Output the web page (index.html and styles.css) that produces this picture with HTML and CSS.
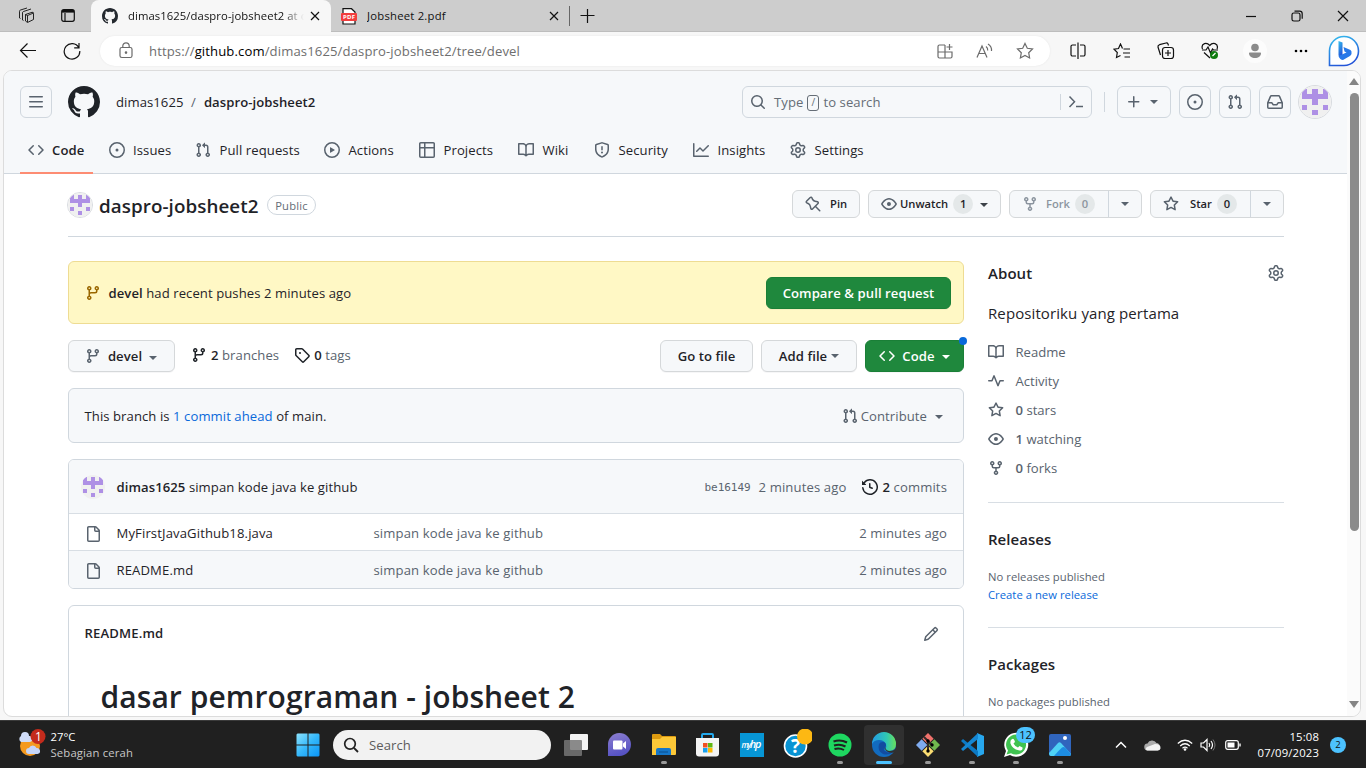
FILE: index.html
```html
<!DOCTYPE html>
<html lang="id">
<head>
<meta charset="utf-8">
<title>dimas1625/daspro-jobsheet2 at devel</title>
<link rel="stylesheet" href="styles.css">
</head>
<body>
<svg class="sprite" width="0" height="0" aria-hidden="true">
  <symbol id="mark" viewBox="0 0 16 16"><path d="M8 0c4.42 0 8 3.58 8 8a8.013 8.013 0 0 1-5.45 7.59c-.4.08-.55-.17-.55-.38 0-.27.01-1.13.01-2.2 0-.75-.25-1.23-.54-1.48 1.78-.2 3.65-.88 3.65-3.95 0-.88-.31-1.59-.82-2.15.08-.2.36-1.02-.08-2.12 0 0-.67-.22-2.2.82-.64-.18-1.32-.27-2-.27-.68 0-1.36.09-2 .27-1.53-1.03-2.2-.82-2.2-.82-.44 1.1-.16 1.92-.08 2.12-.51.56-.82 1.28-.82 2.15 0 3.06 1.86 3.75 3.64 3.95-.23.2-.44.55-.51 1.07-.46.21-1.61.55-2.33-.66-.15-.24-.6-.83-1.23-.82-.67.01-.27.38.01.53.34.19.73.9.82 1.13.16.45.68 1.31 2.69.94 0 .67.01 1.3.01 1.49 0 .21-.15.45-.55.38A7.995 7.995 0 0 1 0 8c0-4.42 3.58-8 8-8Z"/></symbol>
  <symbol id="code" viewBox="0 0 16 16"><path d="m11.28 3.22 4.25 4.25a.75.75 0 0 1 0 1.06l-4.25 4.25a.749.749 0 1 1-1.06-1.06L13.94 8l-3.72-3.72a.749.749 0 1 1 1.06-1.06Zm-6.56 0a.751.751 0 0 1 1.06 1.06L2.06 8l3.72 3.72a.749.749 0 1 1-1.06 1.06L.47 8.53a.75.75 0 0 1 0-1.06Z"/></symbol>
  <symbol id="issue" viewBox="0 0 16 16"><path d="M8 9.5a1.5 1.5 0 1 0 0-3 1.5 1.5 0 0 0 0 3Z"/><path d="M8 0a8 8 0 1 1 0 16A8 8 0 0 1 8 0ZM1.5 8a6.5 6.5 0 1 0 13 0 6.5 6.5 0 0 0-13 0Z"/></symbol>
  <symbol id="pr" viewBox="0 0 16 16"><path d="M1.5 3.25a2.25 2.25 0 1 1 3 2.122v5.256a2.251 2.251 0 1 1-1.5 0V5.372A2.25 2.25 0 0 1 1.5 3.25Zm5.677-.177L9.573.677A.25.25 0 0 1 10 .854V2.5h1A2.5 2.5 0 0 1 13.5 5v5.628a2.251 2.251 0 1 1-1.5 0V5a1 1 0 0 0-1-1h-1v1.646a.25.25 0 0 1-.427.177L7.177 3.427a.25.25 0 0 1 0-.354ZM3.75 2.5a.75.75 0 1 0 0 1.5.75.75 0 0 0 0-1.5Zm0 9.5a.75.75 0 1 0 0 1.5.75.75 0 0 0 0-1.5Zm8.25.75a.75.75 0 1 0 1.5 0 .75.75 0 0 0-1.5 0Z"/></symbol>
  <symbol id="play" viewBox="0 0 16 16"><path d="M8 0a8 8 0 1 1 0 16A8 8 0 0 1 8 0ZM1.5 8a6.5 6.5 0 1 0 13 0 6.5 6.5 0 0 0-13 0Zm4.879-2.773 4.264 2.559a.25.25 0 0 1 0 .428l-4.264 2.559A.25.25 0 0 1 6 10.559V5.442a.25.25 0 0 1 .379-.215Z"/></symbol>
  <symbol id="table" viewBox="0 0 16 16"><path d="M0 1.75C0 .784.784 0 1.75 0h12.5C15.216 0 16 .784 16 1.75v12.5A1.75 1.75 0 0 1 14.25 16H1.75A1.75 1.75 0 0 1 0 14.25ZM6.5 6.5v8h7.75a.25.25 0 0 0 .25-.25V6.5Zm8-1.5V1.75a.25.25 0 0 0-.25-.25H6.5V5Zm-13 1.5v7.75c0 .138.112.25.25.25H5v-8ZM5 5V1.5H1.75a.25.25 0 0 0-.25.25V5Z"/></symbol>
  <symbol id="book" viewBox="0 0 16 16"><path d="M0 1.75A.75.75 0 0 1 .75 1h4.253c1.227 0 2.317.59 3 1.501A3.743 3.743 0 0 1 11.006 1h4.245a.75.75 0 0 1 .75.75v10.5a.75.75 0 0 1-.75.75h-4.507a2.25 2.25 0 0 0-1.591.659l-.622.621a.75.75 0 0 1-1.06 0l-.622-.621A2.25 2.25 0 0 0 5.258 13H.75a.75.75 0 0 1-.75-.75Zm7.251 10.324.004-5.073-.002-2.253A2.25 2.25 0 0 0 5.003 2.5H1.5v9h3.757a3.75 3.75 0 0 1 1.994.574ZM8.755 4.75l-.004 7.322a3.752 3.752 0 0 1 1.992-.572H14.5v-9h-3.495a2.25 2.25 0 0 0-2.25 2.25Z"/></symbol>
  <symbol id="shield" viewBox="0 0 16 16"><path d="M7.467.133a1.748 1.748 0 0 1 1.066 0l5.25 1.68A1.75 1.75 0 0 1 15 3.48V7c0 1.566-.32 3.182-1.303 4.682-.983 1.498-2.585 2.813-5.032 3.855a1.697 1.697 0 0 1-1.33 0c-2.447-1.042-4.049-2.357-5.032-3.855C1.32 10.182 1 8.566 1 7V3.48a1.75 1.75 0 0 1 1.217-1.667Zm.61 1.429a.25.25 0 0 0-.153 0l-5.25 1.68a.25.25 0 0 0-.174.238V7c0 1.358.275 2.666 1.057 3.86.784 1.194 2.121 2.34 4.366 3.297a.196.196 0 0 0 .154 0c2.245-.956 3.582-2.104 4.366-3.298C13.225 9.666 13.5 8.36 13.5 7V3.48a.251.251 0 0 0-.174-.237l-5.25-1.68ZM8.75 4.75v3a.75.75 0 0 1-1.5 0v-3a.75.75 0 0 1 1.5 0ZM9 10.5a1 1 0 1 1-2 0 1 1 0 0 1 2 0Z"/></symbol>
  <symbol id="graph" viewBox="0 0 16 16"><path d="M1.5 1.75V13.5h13.75a.75.75 0 0 1 0 1.5H.75a.75.75 0 0 1-.75-.75V1.75a.75.75 0 0 1 1.5 0Zm14.28 2.53-5.25 5.25a.75.75 0 0 1-1.06 0L7 7.06 4.28 9.78a.751.751 0 1 1-1.06-1.06l3.25-3.25a.75.75 0 0 1 1.06 0L10 7.94l4.72-4.72a.751.751 0 1 1 1.06 1.06Z"/></symbol>
  <symbol id="gear" viewBox="0 0 16 16"><path d="M8 0a8.2 8.2 0 0 1 .701.031C9.444.095 9.99.645 10.16 1.29l.288 1.107c.018.066.079.158.212.224.231.114.454.243.668.386.123.082.233.09.299.071l1.103-.303c.644-.176 1.392.021 1.82.63.27.385.506.792.704 1.218.315.675.111 1.422-.364 1.891l-.814.806c-.049.048-.098.147-.088.294.016.257.016.515 0 .772-.01.147.038.246.088.294l.814.806c.475.469.679 1.216.364 1.891a7.977 7.977 0 0 1-.704 1.217c-.428.61-1.176.807-1.82.63l-1.102-.302c-.067-.019-.177-.011-.3.071a5.909 5.909 0 0 1-.668.386c-.133.066-.194.158-.211.224l-.29 1.106c-.168.646-.715 1.196-1.458 1.26a8.006 8.006 0 0 1-1.402 0c-.743-.064-1.289-.614-1.458-1.26l-.289-1.106c-.018-.066-.079-.158-.212-.224a5.738 5.738 0 0 1-.668-.386c-.123-.082-.233-.09-.299-.071l-1.103.303c-.644.176-1.392-.021-1.82-.63a8.12 8.12 0 0 1-.704-1.218c-.315-.675-.111-1.422.363-1.891l.815-.806c.05-.048.098-.147.088-.294a6.214 6.214 0 0 1 0-.772c.01-.147-.038-.246-.088-.294l-.815-.806C.635 6.045.431 5.298.746 4.623a7.92 7.92 0 0 1 .704-1.217c.428-.61 1.176-.807 1.82-.63l1.102.302c.067.019.177.011.3-.071.214-.143.437-.272.668-.386.133-.066.194-.158.211-.224l.29-1.106C6.009.645 6.556.095 7.299.03 7.53.01 7.764 0 8 0Zm-.571 1.525c-.036.003-.108.036-.137.146l-.289 1.105c-.147.561-.549.967-.998 1.189-.173.086-.34.183-.5.29-.417.278-.97.423-1.529.27l-1.103-.303c-.109-.03-.175.016-.195.045-.22.312-.412.644-.573.99-.014.031-.021.11.059.19l.815.806c.411.406.562.957.53 1.456a4.709 4.709 0 0 0 0 .582c.032.499-.119 1.05-.53 1.456l-.815.806c-.081.08-.073.159-.059.19.162.346.353.677.573.989.02.03.085.076.195.046l1.102-.303c.56-.153 1.113-.008 1.53.27.161.107.328.204.501.29.447.222.85.629.997 1.189l.289 1.105c.029.109.101.143.137.146a6.6 6.6 0 0 0 1.142 0c.036-.003.108-.036.137-.146l.289-1.105c.147-.561.549-.967.998-1.189.173-.086.34-.183.5-.29.417-.278.97-.423 1.529-.27l1.103.303c.109.029.175-.016.195-.045.22-.313.411-.644.573-.99.014-.031.021-.11-.059-.19l-.815-.806c-.411-.406-.562-.957-.53-1.456a4.709 4.709 0 0 0 0-.582c-.032-.499.119-1.05.53-1.456l.815-.806c.081-.08.073-.159.059-.19a6.464 6.464 0 0 0-.573-.989c-.02-.03-.085-.076-.195-.046l-1.102.303c-.56.153-1.113.008-1.53-.27a4.44 4.44 0 0 0-.501-.29c-.447-.222-.85-.629-.997-1.189l-.289-1.105c-.029-.11-.101-.143-.137-.146a6.6 6.6 0 0 0-1.142 0ZM11 8a3 3 0 1 1-6 0 3 3 0 0 1 6 0ZM9.5 8a1.5 1.5 0 1 0-3.001.001A1.5 1.5 0 0 0 9.5 8Z"/></symbol>
  <symbol id="pin" viewBox="0 0 16 16"><path d="m11.294.984 3.722 3.722a1.75 1.75 0 0 1-.504 2.826l-1.327.613a3.089 3.089 0 0 0-1.707 2.084l-.584 2.454c-.317 1.332-1.972 1.8-2.94.832L5.75 11.311 1.78 15.28a.749.749 0 1 1-1.06-1.06l3.969-3.97-2.204-2.204c-.968-.968-.5-2.623.832-2.94l2.454-.584a3.08 3.08 0 0 0 2.084-1.707l.613-1.327a1.75 1.75 0 0 1 2.826-.504ZM6.283 9.723l2.732 2.731a.25.25 0 0 0 .42-.119l.584-2.454a4.586 4.586 0 0 1 2.537-3.098l1.328-.613a.25.25 0 0 0 .072-.404l-3.722-3.722a.25.25 0 0 0-.404.072l-.613 1.328a4.584 4.584 0 0 1-3.098 2.537l-2.454.584a.25.25 0 0 0-.119.42l2.731 2.732Z"/></symbol>
  <symbol id="eye" viewBox="0 0 16 16"><path d="M8 2c1.981 0 3.671.992 4.933 2.078 1.27 1.091 2.187 2.345 2.637 3.023a1.62 1.62 0 0 1 0 1.798c-.45.678-1.367 1.932-2.637 3.023C11.67 13.008 9.981 14 8 14c-1.981 0-3.671-.992-4.933-2.078C1.797 10.83.88 9.576.43 8.898a1.62 1.62 0 0 1 0-1.798c.45-.677 1.367-1.931 2.637-3.022C4.33 2.992 6.019 2 8 2ZM1.679 7.932a.12.12 0 0 0 0 .136c.411.622 1.241 1.75 2.366 2.717C5.176 11.758 6.527 12.5 8 12.5c1.473 0 2.825-.742 3.955-1.715 1.124-.967 1.954-2.096 2.366-2.717a.12.12 0 0 0 0-.136c-.412-.621-1.242-1.75-2.366-2.717C10.824 4.242 9.473 3.5 8 3.5c-1.473 0-2.825.742-3.955 1.715-1.124.967-1.954 2.096-2.366 2.717ZM8 10a2 2 0 1 1-.001-3.999A2 2 0 0 1 8 10Z"/></symbol>
  <symbol id="fork" viewBox="0 0 16 16"><path d="M5 5.372v.878c0 .414.336.75.75.75h4.5a.75.75 0 0 0 .75-.75v-.878a2.25 2.25 0 1 1 1.5 0v.878a2.25 2.25 0 0 1-2.25 2.25h-1.5v2.128a2.251 2.251 0 1 1-1.5 0V8.5h-1.5A2.25 2.25 0 0 1 3.5 6.25v-.878a2.25 2.25 0 1 1 1.5 0ZM5 3.25a.75.75 0 1 0-1.5 0 .75.75 0 0 0 1.5 0Zm6.75.75a.75.75 0 1 0 0-1.5.75.75 0 0 0 0 1.5Zm-3 8.75a.75.75 0 1 0-1.5 0 .75.75 0 0 0 1.5 0Z"/></symbol>
  <symbol id="star" viewBox="0 0 16 16"><path d="M8 .25a.75.75 0 0 1 .673.418l1.882 3.815 4.21.612a.75.75 0 0 1 .416 1.279l-3.046 2.97.719 4.192a.751.751 0 0 1-1.088.791L8 12.347l-3.766 1.98a.75.75 0 0 1-1.088-.79l.72-4.194L.818 6.374a.75.75 0 0 1 .416-1.28l4.21-.611L7.327.668A.75.75 0 0 1 8 .25Zm0 2.445L6.615 5.5a.75.75 0 0 1-.564.41l-3.097.45 2.24 2.184a.75.75 0 0 1 .216.664l-.528 3.084 2.769-1.456a.75.75 0 0 1 .698 0l2.77 1.456-.53-3.084a.75.75 0 0 1 .216-.664l2.24-2.183-3.096-.45a.75.75 0 0 1-.564-.41L8 2.694Z"/></symbol>
  <symbol id="branch" viewBox="0 0 16 16"><path d="M9.5 3.25a2.25 2.25 0 1 1 3 2.122V6A2.5 2.5 0 0 1 10 8.5H6a1 1 0 0 0-1 1v1.128a2.251 2.251 0 1 1-1.5 0V5.372a2.25 2.25 0 1 1 1.5 0v1.836A2.493 2.493 0 0 1 6 7h4a1 1 0 0 0 1-1v-.628A2.25 2.25 0 0 1 9.5 3.25Zm-6 0a.75.75 0 1 0 1.5 0 .75.75 0 0 0-1.5 0Zm8.25-.75a.75.75 0 1 0 0 1.5.75.75 0 0 0 0-1.5ZM4.25 12a.75.75 0 1 0 0 1.5.75.75 0 0 0 0-1.5Z"/></symbol>
  <symbol id="tag" viewBox="0 0 16 16"><path d="M1 7.775V2.75C1 1.784 1.784 1 2.75 1h5.025c.464 0 .91.184 1.238.513l6.25 6.25a1.75 1.75 0 0 1 0 2.474l-5.026 5.026a1.75 1.75 0 0 1-2.474 0l-6.25-6.25A1.752 1.752 0 0 1 1 7.775Zm1.5 0c0 .066.026.13.073.177l6.25 6.25a.25.25 0 0 0 .354 0l5.025-5.025a.25.25 0 0 0 0-.354l-6.25-6.25a.25.25 0 0 0-.177-.073H2.75a.25.25 0 0 0-.25.25ZM6 5a1 1 0 1 1 0 2 1 1 0 0 1 0-2Z"/></symbol>
  <symbol id="file" viewBox="0 0 16 16"><path d="M2 1.75C2 .784 2.784 0 3.75 0h6.586c.464 0 .909.184 1.237.513l2.914 2.914c.329.328.513.773.513 1.237v9.586A1.75 1.75 0 0 1 13.25 16h-9.5A1.75 1.75 0 0 1 2 14.25Zm1.75-.25a.25.25 0 0 0-.25.25v12.5c0 .138.112.25.25.25h9.5a.25.25 0 0 0 .25-.25V6h-2.75A1.75 1.75 0 0 1 9 4.25V1.5Zm6.75.062V4.25c0 .138.112.25.25.25h2.688l-.011-.013-2.914-2.914-.013-.011Z"/></symbol>
  <symbol id="history" viewBox="0 0 16 16"><path d="m.427 1.927 1.215 1.215a8.002 8.002 0 1 1-1.6 5.685.75.75 0 1 1 1.493-.154 6.5 6.5 0 1 0 1.18-4.458l1.358 1.358A.25.25 0 0 1 3.896 6H.25A.25.25 0 0 1 0 5.75V2.104a.25.25 0 0 1 .427-.177ZM7.75 4a.75.75 0 0 1 .75.75v2.992l2.028.812a.75.75 0 0 1-.557 1.392l-2.5-1A.751.751 0 0 1 7 8.25v-3.5A.75.75 0 0 1 7.75 4Z"/></symbol>
  <symbol id="pencil" viewBox="0 0 16 16"><path d="M11.013 1.427a1.75 1.75 0 0 1 2.474 0l1.086 1.086a1.75 1.75 0 0 1 0 2.474l-8.61 8.61c-.21.21-.47.364-.756.445l-3.251.93a.75.75 0 0 1-.927-.928l.929-3.25c.081-.286.235-.547.445-.758l8.61-8.61Zm.176 4.823L9.75 4.81l-6.286 6.287a.253.253 0 0 0-.064.108l-.558 1.953 1.953-.558a.253.253 0 0 0 .108-.064Zm1.238-3.763a.25.25 0 0 0-.354 0L10.811 3.75l1.439 1.44 1.263-1.263a.25.25 0 0 0 0-.354Z"/></symbol>
  <symbol id="pulse" viewBox="0 0 16 16"><path d="M6 2c.306 0 .582.187.696.471L10 10.731l1.304-3.26A.751.751 0 0 1 12 7h3.25a.75.75 0 0 1 0 1.5h-2.742l-1.812 4.528a.751.751 0 0 1-1.392 0L6 4.77 4.696 8.03A.75.75 0 0 1 4 8.5H.75a.75.75 0 0 1 0-1.5h2.742l1.812-4.529A.751.751 0 0 1 6 2Z"/></symbol>
  <symbol id="inbox" viewBox="0 0 16 16"><path d="M2.8 2.06A1.75 1.75 0 0 1 4.41 1h7.18c.7 0 1.333.417 1.61 1.06l2.74 6.395c.04.093.06.194.06.295v4.5A1.75 1.75 0 0 1 14.25 15H1.75A1.75 1.75 0 0 1 0 13.25v-4.5c0-.101.02-.202.06-.295Zm1.61.44a.25.25 0 0 0-.23.152L1.887 8H4.75a.75.75 0 0 1 .6.3L6.625 10h2.75l1.275-1.7a.75.75 0 0 1 .6-.3h2.863L11.82 2.652a.25.25 0 0 0-.23-.152Zm10.09 7h-2.875l-1.275 1.7a.75.75 0 0 1-.6.3h-3.5a.75.75 0 0 1-.6-.3L4.375 9.5H1.5v3.75c0 .138.112.25.25.25h12.5a.25.25 0 0 0 .25-.25Z"/></symbol>
  <symbol id="search" viewBox="0 0 16 16"><path d="M10.68 11.74a6 6 0 0 1-7.922-8.982 6 6 0 0 1 8.982 7.922l3.04 3.04a.749.749 0 1 1-1.06 1.06ZM11.5 7a4.499 4.499 0 1 0-8.997 0A4.499 4.499 0 0 0 11.5 7Z"/></symbol>
  <symbol id="menu" viewBox="0 0 16 16"><path d="M1 2.75A.75.75 0 0 1 1.75 2h12.5a.75.75 0 0 1 0 1.5H1.75A.75.75 0 0 1 1 2.75Zm0 5A.75.75 0 0 1 1.75 7h12.5a.75.75 0 0 1 0 1.5H1.75A.75.75 0 0 1 1 7.75ZM1.75 12h12.5a.75.75 0 0 1 0 1.5H1.75a.75.75 0 0 1 0-1.5Z"/></symbol>
  <symbol id="plus" viewBox="0 0 16 16"><path d="M7.75 2a.75.75 0 0 1 .75.75V7h4.25a.75.75 0 0 1 0 1.5H8.5v4.25a.75.75 0 0 1-1.5 0V8.5H2.75a.75.75 0 0 1 0-1.5H7V2.75A.75.75 0 0 1 7.75 2Z"/></symbol>
  <symbol id="ident" viewBox="0 0 12 12"><path fill="#f0f0f0" d="M0 0h12v12H0z"/><path fill="#ae90e5" shape-rendering="crispEdges" d="M1 1h2v2h2V1h2v2h2V1h2v4H7v2H5V5H1zM1 7h2v2H1zM9 7h2v2H9zM5 9h2v2H5z"/></symbol>
  <symbol id="x" viewBox="0 0 10 10"><path d="M1 1l8 8M9 1l-8 8" fill="none" stroke="#111" stroke-width="1.2"/></symbol>
</svg>

<header class="tabbar">
  <div class="tabtools">
    <svg width="17" height="17" viewBox="0 0 17 17" class="line thin"><path d="M7.500 7.500L14 5.300q1.500-.3 1.500 1v6.200l-6 3-2-1.500zM7.500 7.500l2 1V15M9.500 8.500l5.800-2.400M4.500 13V5.800q0-1 1-1.300L13 2M1.500 11V4.300q0-1 1-1.300L9 1M4.500 13l1 .5M1.500 11l1 .5"/></svg>
    <svg width="16" height="15" viewBox="0 0 16 15" class="line"><rect x="1.700" y="1.700" width="12.600" height="11.600" rx="2"/><path d="M2 3.300h12" stroke-width="2.600"/><path d="M5 5v8"/></svg>
  </div>
  <div class="tab active"><svg class="i"><use href="#mark"/></svg><span class="tabtitle">dimas1625/daspro-jobsheet2 at d</span><svg class="tx"><use href="#x"/></svg></div>
  <div class="tab second"><svg width="16" height="17" viewBox="0 0 16 17"><path d="M2 .7h8.500L14 4v12H2z" fill="#fff" stroke="#111" stroke-width="1.200"/><rect y="5" width="16" height="8" rx="1" fill="#f23d3d"/><text x="2" y="11.300" font-size="6" font-weight="700" fill="#fff" font-family="Open Sans" textLength="12">PDF</text></svg><span class="tabtitle">Jobsheet 2.pdf</span><svg class="tx"><use href="#x"/></svg></div>
  <svg class="newtab" width="16" height="16" viewBox="0 0 16 16"><path d="M7.500 1v14M.5 7.500h14" stroke="#111" stroke-width="1.200"/></svg>
  <div class="winctl">
    <svg width="12" height="12" viewBox="0 0 12 12" class="line"><path d="M1 6.500h10"/></svg>
    <svg width="12" height="12" viewBox="0 0 12 12" class="line"><rect x="1" y="3" width="8" height="8" rx="1.800"/><path d="M3.500 1.200h5.200a2.500 2.500 0 0 1 2.500 2.500v5"/></svg>
    <svg width="12" height="12" viewBox="0 0 12 12" class="line"><path d="M1 1l10 10M11 1L1 11"/></svg>
  </div>
</header>

<div class="toolbar">
  <svg class="back line" width="18" height="16" viewBox="0 0 18 16"><path d="M17 7.500H1.500M8.500.500L1.500 7.500l7 7"/></svg>
  <svg class="reload line" width="18" height="18" viewBox="0 0 18 18"><path d="M15.800 5.500A7.800 7.800 0 1 0 16.800 9M16 1v4.800h-4.800"/></svg>
  <div class="url">
    <svg class="line gray" width="14" height="17" viewBox="0 0 14 17"><rect x="1" y="5.500" width="12" height="10" rx="1.800"/><path d="M3.800 5.500V4a3.200 3.200 0 0 1 6.400 0v1.500"/><circle cx="7" cy="10.600" r=".7" fill="#666"/></svg>
    <span class="addr">https://<b>github.com</b>/dimas1625/daspro-jobsheet2/tree/devel</span>
    <span class="urlicons">
      <svg class="line gray" width="16" height="16" viewBox="0 0 16 16"><path d="M8 2H2.500A1.500 1.500 0 0 0 1 3.500v10A1.500 1.500 0 0 0 2.500 15h11a1.500 1.500 0 0 0 1.500-1.500V9H1M8 2v13M12.500 1v6M9.500 4h6"/></svg>
      <svg class="line gray" width="17" height="16" viewBox="0 0 17 16"><path d="M1 14.500L6 3l5 11.500M2.800 10.500h6.400M10 3.500q2 1.500 1.700 4M12 1q4 2.500 3.500 7"/></svg>
      <svg class="line gray" width="18" height="18" viewBox="0 0 18 18"><path d="M9 1.500l2.300 4.800 5.200.7-3.800 3.700.9 5.300L9 13.500 4.400 16l.9-5.300L1.500 7l5.200-.7z"/></svg>
    </span>
  </div>
  <div class="edgeicons">
    <span><svg class="line" width="16" height="18" viewBox="0 0 16 18"><path d="M6 3H2.500A1.500 1.500 0 0 0 1 4.500v8A1.500 1.500 0 0 0 2.500 14H6M10 3h3.500A1.500 1.500 0 0 1 15 4.500v8a1.500 1.500 0 0 1-1.500 1.500H10M8 .500v16.500"/></svg></span>
    <span><svg class="line" width="18" height="17" viewBox="0 0 18 17"><path d="M9.500 5.500L7.500 1 5.500 5.500l-4.500.7 3.300 3.300-.8 5 4-2M10.500 6H17M10 10h7M11.500 14H17"/></svg></span>
    <span><svg class="line" width="18" height="18" viewBox="0 0 18 18"><rect x="5.500" y="5.500" width="11" height="11" rx="2.500"/><path d="M11 8v6M8 11h6M3.500 13L1 5Q.7 3.300 2.500 2.700L9 1q1.500-.3 2 1l.5 1.500"/></svg></span>
    <span><svg class="line" width="18" height="18" viewBox="0 0 18 18"><path d="M1.500 7Q0 3 3.500 1.600 6.500.7 8.700 3.500 11 .7 14 1.600q3.500 1.400 2 5.400M1 8h4l2-3 2.500 6 2-4 1 1h4.500M3 10.500l6 5.500"/><circle cx="13" cy="13" r="4" fill="#107c10" stroke="none"/><path d="M11.500 14l3-3" stroke="#fff"/></svg></span>
    <span class="person"><svg width="24" height="24" viewBox="0 0 24 24"><circle cx="12" cy="12" r="12" fill="#fcfcfc"/><circle cx="12" cy="8.500" r="3.800" fill="#8b8b8b"/><path d="M6 14.200q0-.7.700-.7h10.600q.7 0 .7.700c0 3-2.700 4.800-6 4.800s-6-1.800-6-4.800z" fill="#8b8b8b"/></svg></span>
    <span><svg width="14" height="4" viewBox="0 0 14 4"><circle cx="2" cy="2" r="1.300"/><circle cx="7" cy="2" r="1.300"/><circle cx="12" cy="2" r="1.300"/></svg></span>
    <svg class="bing" width="32" height="32" viewBox="0 0 32 32"><defs><linearGradient id="bg" x1="0" y1="0" x2=".4" y2="1"><stop offset="0" stop-color="#35c1ee"/><stop offset="1" stop-color="#2455d8"/></linearGradient></defs><path d="M1.500 30.500V16A14.500 14.500 0 1 1 16 30.500z" fill="#fff" stroke="url(#bg)" stroke-width="1.600"/><path d="M10.500 6l4 1.500v13L12.500 22l-2-1.500z" fill="url(#bg)"/><path d="M15.500 12l7 3q1.500 1 1 4-.5 1.500-2 2.300L15 25q-3 0-4.500-4l8-3.500-2-1z" fill="#2878e8"/></svg>
  </div>
</div>

<div class="frame">
<div class="page">
  <div class="ghead">
    <div class="gtop">
      <span class="sq"><svg class="i"><use href="#menu"/></svg></span>
      <svg class="logo"><use href="#mark"/></svg>
      <span class="crumb">dimas1625</span><span class="slash">/</span><b class="crumb repo">daspro-jobsheet2</b>
      <div class="gsearch"><svg class="i"><use href="#search"/></svg><span class="stext">Type <kbd>/</kbd> to search</span><svg class="term" width="16" height="16" viewBox="0 0 16 16"><path d="M1.500 2.500l5 5.300-5 5.300M8 12.600h7" fill="none" stroke="#59636e" stroke-width="1.500"/></svg></div>
      <span class="vline"></span>
      <span class="sq wide"><svg class="i"><use href="#plus"/></svg><i class="caret"></i></span>
      <span class="sq"><svg class="i"><use href="#issue"/></svg></span>
      <span class="sq"><svg class="i"><use href="#pr"/></svg></span>
      <span class="sq"><svg class="i"><use href="#inbox"/></svg></span>
      <svg class="avatar"><use href="#ident"/></svg>
    </div>
    <nav class="gnav">
      <a class="on"><svg class="i"><use href="#code"/></svg>Code</a>
      <a><svg class="i"><use href="#issue"/></svg>Issues</a>
      <a><svg class="i"><use href="#pr"/></svg>Pull requests</a>
      <a><svg class="i"><use href="#play"/></svg>Actions</a>
      <a><svg class="i"><use href="#table"/></svg>Projects</a>
      <a><svg class="i"><use href="#book"/></svg>Wiki</a>
      <a><svg class="i"><use href="#shield"/></svg>Security</a>
      <a><svg class="i"><use href="#graph"/></svg>Insights</a>
      <a><svg class="i"><use href="#gear"/></svg>Settings</a>
    </nav>
  </div>

  <div class="wrap">
    <div class="title">
      <svg class="avatar small"><use href="#ident"/></svg><h2>daspro-jobsheet2</h2><span class="pill">Public</span>
      <div class="acts">
        <span class="sbtn pin"><svg class="i flip"><use href="#pin"/></svg>Pin</span>
        <span class="sbtn watch"><svg class="i"><use href="#eye"/></svg>Unwatch<em>1</em><i class="caret"></i></span>
        <span class="sbtn split"><span class="main dim"><svg class="i"><use href="#fork"/></svg>Fork<em>0</em></span><span class="drop"><i class="caret"></i></span></span>
        <span class="sbtn split"><span class="main st"><svg class="i"><use href="#star"/></svg>Star<em>0</em></span><span class="drop"><i class="caret"></i></span></span>
      </div>
    </div>

    <div class="cols">
      <main>
        <div class="flash"><svg class="i"><use href="#branch"/></svg><span><b>devel</b> had recent pushes 2 minutes ago</span><span class="btn green">Compare &amp; pull request</span></div>
        <div class="filebar">
          <span class="btn branchbtn"><svg class="i"><use href="#branch"/></svg>devel<i class="caret"></i></span>
          <span class="meta br"><svg class="i"><use href="#branch"/></svg><span><b>2</b> branches</span></span>
          <span class="meta"><svg class="i"><use href="#tag"/></svg><span><b>0</b> tags</span></span>
          <span class="btn goto">Go to file</span>
          <span class="btn add">Add file<i class="caret"></i></span>
          <span class="btn green codebtn"><svg class="i"><use href="#code"/></svg>Code<i class="caret"></i><span class="dot"></span></span>
        </div>
        <div class="box ahead"><span>This branch is <a class="link">1 commit ahead</a> of main.</span><span class="contrib"><svg class="i"><use href="#pr"/></svg>Contribute<i class="caret"></i></span></div>
        <div class="box files">
          <div class="commit"><svg class="avatar mini"><use href="#ident"/></svg><span><b>dimas1625</b> simpan kode java ke github</span><span class="right"><code>be16149</code><span class="when">2 minutes ago</span><svg class="i"><use href="#history"/></svg><span><b>2</b> commits</span></span></div>
          <div class="row"><svg class="i"><use href="#file"/></svg><span class="name">MyFirstJavaGithub18.java</span><span class="msg">simpan kode java ke github</span><span class="ago">2 minutes ago</span></div>
          <div class="row alt"><svg class="i"><use href="#file"/></svg><span class="name">README.md</span><span class="msg">simpan kode java ke github</span><span class="ago">2 minutes ago</span></div>
        </div>
        <div class="box readme">
          <div class="rhead"><b>README.md</b><svg class="i"><use href="#pencil"/></svg></div>
          <h1>dasar pemrograman - jobsheet 2</h1>
        </div>
      </main>
      <aside>
        <div class="about"><h3>About</h3><svg class="i"><use href="#gear"/></svg></div>
        <p class="desc">Repositoriku yang pertama</p>
        <ul>
          <li><svg class="i"><use href="#book"/></svg><span>Readme</span></li>
          <li><svg class="i"><use href="#pulse"/></svg><span>Activity</span></li>
          <li><svg class="i"><use href="#star"/></svg><span><b>0</b> stars</span></li>
          <li><svg class="i"><use href="#eye"/></svg><span><b>1</b> watching</span></li>
          <li><svg class="i"><use href="#fork"/></svg><span><b>0</b> forks</span></li>
        </ul>
        <section><h3>Releases</h3><p>No releases published</p><p><a class="link">Create a new release</a></p></section>
        <section><h3>Packages</h3><p>No packages published</p><p><a class="link">Publish your first package</a></p></section>
      </aside>
    </div>
  </div>
</div>
<div class="scroll"><i class="up"></i><i class="thumb"></i><i class="down"></i></div>
</div>

<footer class="taskbar">
  <div class="weather">
    <svg width="30" height="32" viewBox="0 0 30 32"><circle cx="13" cy="17" r="10" fill="#f59a1f"/><path d="M4 13a3.500 3.500 0 0 1 0-6 4 4 0 0 1 8 0 3 3 0 0 1 1 6z" fill="#cfdcf8"/><path d="M12 25a3 3 0 0 1 0-6 4 4 0 0 1 7.500 0 3 3 0 0 1 1 6z" fill="#c5d5f8"/><circle cx="21" cy="7.500" r="7.500" fill="#c42b1c"/><text x="18" y="11.800" font-size="12" fill="#fff" font-family="Open Sans">1</text></svg>
    <div><div class="temp">27°C</div><div class="cond">Sebagian cerah</div></div>
  </div>
  <svg class="win" width="24" height="24" viewBox="0 0 24 24"><defs><linearGradient id="w" x2="1" y2="1"><stop offset="0" stop-color="#8ce2fd"/><stop offset=".5" stop-color="#35b8fb"/><stop offset="1" stop-color="#0a94f6"/></linearGradient></defs><path fill="url(#w)" d="M1.500.500h10v11H.500v-10zM12.500.500h10l1 1v10h-11zM.500 12.500h11v11h-10l-1-1zM12.500 12.500h11v10l-1 1h-10z"/></svg>
  <div class="tsearch"><svg width="16" height="16" viewBox="0 0 16 16"><circle cx="7" cy="6.800" r="5.300" fill="none" stroke="#222" stroke-width="1.700"/><path d="M11 11l4 4" stroke="#222" stroke-width="1.800"/></svg>Search</div>
  <div class="apps">
    <span><svg width="26" height="26" viewBox="0 0 26 26"><rect x="7" y="2" width="18" height="16" rx="1" fill="#f3f3f3"/><rect x="1" y="8" width="18" height="16" rx="1" fill="#777" opacity=".85"/></svg></span>
    <span><svg width="26" height="26" viewBox="0 0 26 26"><defs><linearGradient id="ch" x2=".3" y2="1"><stop offset="0" stop-color="#8d7fd0"/><stop offset="1" stop-color="#5753c4"/></linearGradient></defs><path d="M1 24V13A11.500 11.500 0 1 1 12.500 24z" fill="url(#ch)"/><rect x="6" y="8.500" width="9.500" height="9" rx="1" fill="#fff"/><path d="M16 11.500l3-2.500v8l-3-2.500z" fill="#fff"/></svg></span>
    <span class="run"><svg width="26" height="26" viewBox="0 0 26 26"><path d="M1 3q0-1 1-1h7l2 2h13q1 0 1 1v4H1z" fill="#dc9a10"/><path d="M1 7h8l2-2h14v17q0 1-1 1H1z" fill="#fcc838"/><path d="M5 23v-5q0-2 2-2h11q2 0 2 2v5z" fill="#1576c8"/><path d="M8 20h9" stroke="#0b4c8c"/></svg></span>
    <span><svg width="26" height="26" viewBox="0 0 26 26"><path d="M7 7V3q0-1 1-1h9q1 0 1 1v4" fill="none" stroke="#23a9ed" stroke-width="2"/><path d="M1 6h23v15.500q0 3-3 3H4q-3 0-3-3z" fill="#f4f4f4"/><path fill="#f25022" d="M8 11h4.500v4.500H8z"/><path fill="#5fb611" d="M13 11h4.500v4.500H13z"/><path fill="#18a0ee" d="M8 16h4.500v4.500H8z"/><path fill="#ffb900" d="M13 16h4.500v4.500H13z"/></svg></span>
    <span><svg width="26" height="26" viewBox="0 0 26 26"><path fill="#0796d6" d="M1 1h24v24H1z"/><text x="2.500" y="16" font-family="Open Sans" font-style="italic" fill="#fff" font-weight="600" font-size="8" textLength="20">my<tspan font-size="11">hp</tspan></text></svg></span>
    <span><svg width="32" height="32" viewBox="0 0 32 32"><circle cx="15.500" cy="17" r="11" fill="#0893d3" stroke="#fff" stroke-width="1.600"/><text x="11" y="24" font-size="19" font-weight="700" fill="#fff" font-family="Open Sans">?</text><circle cx="25" cy="7.500" r="8" fill="#fdb813"/></svg></span>
    <span class="run"><svg width="26" height="26" viewBox="0 0 26 26"><circle cx="13" cy="13" r="11.500" fill="#1ed760"/><path d="M6.500 9.500q7-2.500 13.500 1M7 13.500q6-2 11.500 1M7.500 17q5-1.500 9.500 1" fill="none" stroke="#202020" stroke-width="2"/></svg></span>
    <span class="run current"><svg width="26" height="26" viewBox="0 0 26 26"><defs><linearGradient id="e" x2="1"><stop offset="0" stop-color="#239be5"/><stop offset=".6" stop-color="#2fc7b4"/><stop offset="1" stop-color="#68e05c"/></linearGradient></defs><circle cx="13" cy="13" r="12" fill="#126bbf"/><path d="M1 12A12 12 0 0 1 25 12q0 7-7 7-4 0-4-2 2-2 1-5-2-4-7-4-5 0-7 4z" fill="url(#e)"/><path d="M8 12q-2 7 4 10 6 2 11-3-5 3-9 0-3-2 1-5 0-4-3-4-3 0-4 2z" fill="#124ca0"/><path d="M14 17q-1-1 0-2 1 4 5 4 3 0 6-2.500V20q-8 2.500-11-3z" fill="#303030"/></svg></span>
    <span class="run"><svg width="26" height="26" viewBox="0 0 26 26"><g transform="rotate(45 13 13)"><path fill="#f0726c" d="M4.500 4.500h8v8h-8z"/><path fill="#71b84f" d="M13.500 4.500h8v8h-8z"/><path fill="#7fabef" d="M4.500 13.500h8v8h-8z"/><path fill="#fadc72" d="M13.500 13.500h8v8h-8z"/></g><path d="M9 5l8 8M13 9v11" stroke="#332b2a" stroke-width="2"/><circle cx="13" cy="9" r="1.700"/><circle cx="17" cy="13" r="1.700"/><circle cx="13" cy="19" r="1.700"/></svg></span>
    <span class="run"><svg width="26" height="26" viewBox="0 0 26 26"><path d="M18 1l7 3v18l-7 3z" fill="#27a7ee"/><path d="M2 9l2-2 15 12v6z" fill="#0c79c4"/><path d="M2 17l2 2L19 7V1z" fill="#1587d3"/></svg></span>
    <span class="run badge"><svg width="26" height="26" viewBox="0 0 26 26"><path d="M1 25l2-6A12 12 0 1 1 7 23z" fill="#fff"/><path d="M3.500 22.500l1.500-4a10 10 0 1 1 3 2.700z" fill="#40c351"/><path d="M8.500 7.500q2-2 3 1l.5 1.500-1.500 1.500q1.500 3 4.500 4l1.500-1.500 3 1.500q.5 3-3 3-7-1-9-7-.5-3 1-4z" fill="#fff"/></svg><b>12</b></span>
    <span class="run"><svg width="26" height="26" viewBox="0 0 26 26"><rect x="2" y="2" width="22" height="22" rx="2" fill="#3065bd"/><path d="M2 21l9-10q1.500-1.500 3 0l10 11q0 2-2 2H4q-2 0-2-3z" fill="#4fd2f5"/><path d="M11 19.500l4-4q1.500-1 3 0l6 6.500q0 2-2 2H7z" fill="#1d8de2"/><circle cx="18" cy="6" r="2" fill="#fff"/></svg></span>
  </div>
  <div class="tray">
    <svg width="12" height="8" viewBox="0 0 12 8"><path d="M1 6.500l5-5 5 5" fill="none" stroke="#fff" stroke-width="1.500"/></svg>
    <svg class="cloud" width="18" height="12" viewBox="0 0 18 12"><path d="M4 11.500A3.500 3.500 0 0 1 3.500 4.500 5 5 0 0 1 12.500 4a4 4 0 0 1 1.500 7.500z" fill="#aaa"/><path d="M3 11.500Q.500 10 3 8l8-3q6 0 5.500 4.500-.5 2-3 2z" fill="#f2f2f2"/></svg>
    <svg class="wifi" width="16" height="12" viewBox="0 0 16 12"><path d="M.800 4.500q7.200-6.500 14.400 0M3.200 7q4.800-4.500 9.600 0M5.500 9.200q2.500-2 5 0" fill="none" stroke="#fff" stroke-width="1.200"/><circle cx="8" cy="10.500" r="1.300" fill="#fff"/></svg>
    <svg class="vol" width="16" height="14" viewBox="0 0 16 14"><path d="M1 5h2.500L7 1.500v11L3.500 9H1zM9 5q1.500 2 0 4M11 3q3 4 0 8" fill="none" stroke="#fff" stroke-width="1.200"/><path d="M13 1.500q4 5.500 0 11" fill="none" stroke="#777"/></svg>
    <svg class="bat" width="16" height="10" viewBox="0 0 16 10"><rect x=".7" y=".7" width="12.600" height="8.600" rx="2" fill="none" stroke="#fff" stroke-width="1.200"/><path d="M2.500 2.500h7v5h-7zM14.300 3.500h1.400v3h-1.400z" fill="#fff"/></svg>
    <div class="clock"><div>15:08</div><div>07/09/2023</div></div>
    <span class="noti">2</span>
  </div>
</footer>
</body>
</html>
```
FILE: styles.css
```css
* { box-sizing: border-box; }
body { margin: 0; width: 1366px; height: 768px; overflow: hidden; display: flex; flex-direction: column; background: #f7f7f7; color: #1f2328; font: 13.1px/20px "Open Sans", "Noto Sans", sans-serif; letter-spacing: .07px; }
svg { flex: none; display: block; }
.sprite { position: absolute; }
b { font-weight: 600; }
h1, h2, h3, p, ul { margin: 0; padding: 0; }
span { white-space: nowrap; }
.i { width: 16px; height: 16px; fill: #59636e; }
.line { fill: none; stroke: #111; stroke-width: 1.2; }
.line.gray { stroke: #6b6b6b; }
.line.thin { stroke-width: .9; }
.caret { flex: none; width: 0; height: 0; border: 4px solid transparent; border-top-color: #59636e; border-bottom: 0; }

.tabbar { flex: none; height: 32px; display: flex; background: #cdcdcd; border-bottom: 1px solid #bdbdbd; font-size: 11.3px; color: #111; }
.tabtools { width: 91px; display: flex; align-items: center; gap: 25px; padding-left: 18px; }
.tab { display: flex; align-items: center; height: 32px; }
.tab.active { width: 240px; background: #f7f7f7; border-radius: 8px 8px 0 0; padding-left: 11px; }
.tab.active .i { fill: #24292f; }
.tab .tabtitle { margin-left: 10px; width: 177px; overflow: hidden; }
.tab.active .tabtitle { -webkit-mask-image: linear-gradient(90deg, #000 155px, transparent 176px); mask-image: linear-gradient(90deg, #000 155px, transparent 176px); }
.tx { width: 10px; height: 10px; margin-left: 5px; }
.tab.second { width: 239px; padding-left: 10px; background: linear-gradient(#666, #666) 238px 6px / 1px 20px no-repeat; }
.tab.second .tabtitle { letter-spacing: .22px; }
.newtab { align-self: center; margin-left: 10px; }
.winctl { margin-left: auto; display: flex; align-items: center; gap: 34px; padding-right: 17px; }

.toolbar { flex: none; height: 38px; display: flex; align-items: center; }
.back { margin-left: 19px; }
.reload { margin-left: 26px; }
.url { margin-left: 19px; width: 950px; height: 30px; border-radius: 15px; background: #fff; display: flex; align-items: center; padding: 0 16px 0 19px; box-shadow: 0 0 2px #e4e4e4; }
.url > .gray { margin-top: -2px; }
.addr { margin-left: 16px; color: #6e6e6e; letter-spacing: .12px; }
.addr b { font-weight: 400; color: #000; }
.urlicons { margin-left: auto; display: flex; gap: 23px; align-items: center; }
.edgeicons { display: flex; align-items: center; margin-left: 6px; }
.edgeicons > span { width: 44px; display: flex; justify-content: center; }
.edgeicons .person { width: 46px; }
.edgeicons .person + span { width: 46px; }
.bing { margin-left: 4px; }

.frame { flex: none; height: 647px; margin: 0 5px 3px 3px; display: flex; border: 1px solid #dcdcdc; border-radius: 9px; overflow: hidden; background: #fff; }
.page { width: 1343px; height: 646px; overflow: hidden; }
.scroll { flex: 1; background: #fbfbfb; display: flex; flex-direction: column; align-items: center; padding: 7px 0 8px 1px; }
.up { border: 5px solid transparent; border-top: 0; border-bottom: 7px solid #858585; }
.thumb { width: 9px; height: 438px; border-radius: 5px; background: #8b8b8b; margin-top: 8px; }
.down { margin-top: auto; border: 5px solid transparent; border-bottom: 0; border-top: 7px solid #858585; }

.ghead { height: 104px; background: #f6f8fa; border-bottom: 1px solid #d0d7de; margin-top: -1px; }
.gtop { height: 64px; padding: 0 16px; display: flex; align-items: center; }
.sq { width: 32px; height: 32px; border: 1px solid #d0d7de; border-radius: 6px; display: flex; align-items: center; justify-content: center; margin-right: 8px; }
.sq.wide { width: 54px; gap: 8px; padding-right: 4px; }
.logo { width: 32px; height: 32px; fill: #1f2328; margin: 0 16px 0 8px; }
.crumb { width: 67px; }
.slash { margin: 0 8px; color: #59636e; }
.repo { width: 120px; }
.gsearch { margin-left: auto; width: 350px; height: 32px; border: 1px solid #d0d7de; border-radius: 6px; display: flex; align-items: center; padding: 0 7px; color: #656d76; }
.stext { margin-left: 8px; display: flex; align-items: center; gap: 4px; }
kbd { width: 12px; height: 16px; border: 1px solid #656d76; border-radius: 3px; font: 10px/13px "Open Sans", sans-serif; text-align: center; margin-top: 1px; }
.gsearch::after { content: ""; order: 1; width: 1px; height: 16px; background: #d0d7de; margin: 0 7px 0 auto; }
.term { order: 2; }
.vline { width: 1px; height: 20px; background: #d0d7de; margin: 0 12px; }
.avatar { width: 34px; height: 34px; border-radius: 50%; border: 1px solid #d8dbdf; margin-right: -1px; }
.gtop .avatar { margin-left: -1px; }
.gnav { display: grid; grid-template-columns: 81px 86px 129px 95px 99px 76px 99px 97px 91px; height: 40px; padding-left: 16px; }
.gnav a { display: flex; align-items: center; gap: 8px; padding: 0 0 9px 8px; letter-spacing: .08px; }
.gnav a:nth-child(n+3) { gap: 8.5px; }
.gnav .on { width: 73px; font-weight: 600; border-bottom: 2px solid #fd8c73; padding-bottom: 7px; }

.wrap { width: 1216px; margin-left: 64px; }
.title { height: 63px; display: flex; align-items: center; border-bottom: 1px solid #d0d7de; }
.avatar.small { width: 26px; height: 26px; margin-left: -1px; }
h2 { font-size: 18.8px; line-height: 30px; font-weight: 600; margin: 1px 8px 0 7px; width: 160px; white-space: nowrap; letter-spacing: .08px; }
.pill { width: 49px; height: 20px; border: 1px solid #d0d7de; border-radius: 10px; font: 500 11.2px/19px "Open Sans", sans-serif; letter-spacing: .2px; color: #656d76; text-align: center; }
.acts { margin-left: auto; display: flex; gap: 8px; margin-top: -3px; }
.sbtn { height: 28px; border: 1px solid #d5d8da; border-radius: 6px; background: #f6f8fa; display: flex; align-items: center; font-size: 11.2px; font-weight: 600; letter-spacing: 0; }
.pin { width: 68px; padding-left: 12px; gap: 9px; }
.flip { transform: scaleX(-1); }
.watch { width: 133px; padding-left: 12px; gap: 3px; }
em { min-width: 20px; height: 20px; border-radius: 10px; background: #e4e8e9; font-style: normal; text-align: center; line-height: 20px; margin-left: 3px; }
.watch em { margin-left: 2px; }
.watch .caret { margin: 2px 0 0 4px; border-top-color: #3c4248; }
.split { width: 134px; }
.split:nth-child(3) { width: 133px; }
.main { flex: 1; display: flex; align-items: center; padding-left: 12px; }
.main .i { margin-right: 8px; }
.main.st .i { margin-right: 11px; }
.main em { margin-left: 5px; }
.dim { color: #8c959f; }
.dim .i { fill: #8c959f; }
.dim em { color: #8c959f; }
.drop { width: 33px; height: 26px; border-left: 1px solid #d0d7de; display: flex; align-items: center; justify-content: center; }

.cols { display: grid; grid-template-columns: 896px 296px; gap: 24px; padding-top: 24px; }
main { display: flex; flex-direction: column; gap: 16px; }
.flash { height: 63px; background: #fff8c5; border: 1px solid #eedc93; border-radius: 6px; display: flex; align-items: center; padding: 0 12px 0 16px; gap: 7.5px; }
.flash .i { fill: #9a6700; }
.btn { height: 32px; border: 1px solid #d5d8da; border-radius: 6px; background: #f6f8fa; display: flex; align-items: center; justify-content: center; font-weight: 600; box-shadow: 0 1px 0 rgba(31,35,40,.04); }
.green { background: #1f883d; border-color: #1a7f37; color: #fff; width: 185px; }
.flash .green { margin-left: auto; }
.filebar { display: flex; }
.branchbtn { width: 107px; gap: 7px; margin-right: 16px; padding-right: 1px; }
.branchbtn .caret { margin-top: 3px; }
.meta { display: flex; align-items: center; height: 30px; gap: 4px; color: #59636e; margin-right: 15px; }
.meta b { color: #1f2328; }
.meta .i { fill: #1f2328; }
.goto { margin-left: auto; width: 93px; }
.add { width: 96px; margin: 0 8px; gap: 4px; }
.green.codebtn { width: 99px; gap: 7px; position: relative; }
.codebtn .i { fill: #fff; }
.codebtn .caret { border-top-color: #fff; margin-top: 2px; }
.dot { position: absolute; right: -4px; top: -4px; width: 8px; height: 8px; border-radius: 50%; background: #0969da; }
.box { border: 1px solid #d0d7de; border-radius: 6px; }
.ahead { height: 55px; background: #f6f8fa; display: flex; align-items: center; justify-content: space-between; padding: 0 20px 0 15.5px; }
.link { color: #0969da; }
.contrib { display: flex; align-items: center; gap: 3px; color: #59636e; }
.contrib .caret { margin-left: 5px; margin-top: 3px; }
.files { height: 130px; overflow: hidden; letter-spacing: .12px; }
.commit { height: 54px; background: #f6f8fa; border-bottom: 1px solid #d8dee4; display: flex; align-items: center; padding: 0 16px 0 12px; }
.avatar.mini { width: 24px; height: 24px; border: 0; margin-right: 11.5px; }
.commit > span:nth-child(2) { letter-spacing: .08px; }
.right { margin-left: auto; display: flex; align-items: center; color: #59636e; }
.right b { color: #1f2328; }
.right .i { fill: #1f2328; margin-right: 4px; }
code { font: 11px/20px "DejaVu Sans Mono", monospace; letter-spacing: -.05px; margin: 2px 8px 0 0; }
.when { margin-right: 16px; }
.row { height: 37px; display: flex; align-items: center; padding: 1px 16px 0 16px; border-bottom: 1px solid #d8dee4; color: #59636e; }
.row.alt { background: #f6f8fa; height: 38px; border: 0; padding-bottom: 2px; }
.row .i { margin-top: 2px; }
.name { width: 257px; margin-left: 15.5px; color: #1f2328; }
.ago { margin-left: auto; }
.readme { height: 300px; }
.rhead { display: flex; justify-content: space-between; padding: 17px 24px 0 15.5px; letter-spacing: .15px; }
.rhead .i { margin-top: 3px; }
h1 { font-size: 30px; line-height: 40px; font-weight: 600; margin: 34px 0 0 31.5px; white-space: nowrap; letter-spacing: .07px; }

.about { display: flex; justify-content: space-between; padding-top: 4px; }
h3 { font-size: 15px; line-height: 16px; font-weight: 600; }
aside .desc { font-size: 15px; line-height: 24px; margin: 20px 0 17px; letter-spacing: .1px; }
ul { list-style: none; color: #59636e; border-bottom: 1px solid #d8dee4; padding-bottom: 24px; }
li { display: flex; align-items: center; gap: 11.500px; height: 20px; margin-bottom: 9px; letter-spacing: 0; }
li:last-child { margin-bottom: 0; }
section { border-bottom: 1px solid #d8dee4; height: 125px; padding-top: 28px; font-size: 11.25px; line-height: 18px; color: #59636e; letter-spacing: .03px; }
section h3 { color: #1f2328; margin-bottom: 21px; }

.taskbar { flex: none; height: 48px; background: #202020; border-top: 1px solid #3a3a3a; display: flex; align-items: center; color: #fff; font-size: 11.3px; line-height: 16px; }
.weather { width: 295px; display: flex; gap: 3.5px; padding-left: 17px; letter-spacing: .15px; }
.temp { letter-spacing: 0; }
.cond { color: #c8c8c8; }
.win { margin-left: 1px; }
.tsearch { width: 218px; height: 30px; margin-left: 13px; border-radius: 15px; background: #f2f2f2; color: #5c5c5c; display: flex; align-items: center; gap: 10px; padding-left: 10px; font-size: 13.1px; }
.apps { display: flex; margin-left: 3px; }
.apps > span { position: relative; width: 40px; height: 40px; margin: 0 2px; border-radius: 4px; display: flex; align-items: center; justify-content: center; }
.run::after { content: ""; position: absolute; bottom: 1px; left: 17px; width: 6px; height: 3px; border-radius: 2px; background: #999; }
.apps .current { background: #303030; }
.current::after { width: 16px; left: 12px; background: #4cc2ff; }
.badge b { position: absolute; left: 20px; top: 2px; width: 19px; height: 16px; border-radius: 8px; background: #4cc2ff; color: #111; font: 11px/16px "Open Sans", sans-serif; text-align: center; }
.tray { margin-left: auto; display: flex; align-items: center; padding-right: 20px; }
.cloud { margin-left: 17px; }
.wifi { margin-left: 15px; }
.vol { margin-left: 7px; }
.bat { margin-left: 9px; }
.clock { text-align: right; margin-left: 17px; letter-spacing: .15px; }
.noti { width: 16px; height: 16px; margin-left: 11px; border-radius: 50%; background: #4cc2ff; color: #111; font-size: 9.5px; line-height: 16px; text-align: center; }
```
